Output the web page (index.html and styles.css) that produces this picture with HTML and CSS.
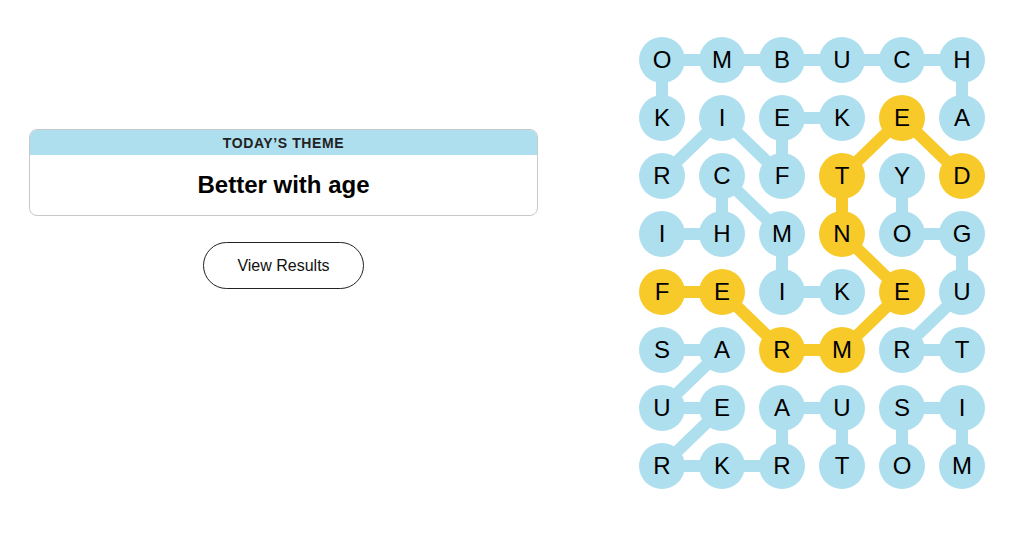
FILE: index.html
```html
<!DOCTYPE html>
<html lang="en">
<head>
    <meta charset="UTF-8">
    <meta name="viewport" content="width=device-width, initial-scale=1.0">
    <title>Strands</title>
    <link rel="stylesheet" href="styles.css">
</head>
<body>
    <div class="game">
        <div class="side">
            <div class="theme-card">
                <h2 class="theme-label">Today&#8217;s Theme</h2>
                <p class="theme-name">Better with age</p>
            </div>
            <button class="results-btn">View Results</button>
        </div>

        <div class="board">
            <svg class="board-lines" width="360" height="464" viewBox="0 0 360 464">
                <g stroke="#aedfee" stroke-width="12" stroke-linecap="round" fill="none">
                    <line x1="30" y1="29" x2="330" y2="29"/>
                    <line x1="30" y1="29" x2="30" y2="87"/>
                    <line x1="330" y1="29" x2="330" y2="87"/>
                    <line x1="90" y1="87" x2="30" y2="145"/>
                    <line x1="90" y1="87" x2="150" y2="145"/>
                    <line x1="150" y1="87" x2="210" y2="87"/>
                    <line x1="150" y1="87" x2="150" y2="145"/>
                    <line x1="90" y1="145" x2="90" y2="203"/>
                    <line x1="90" y1="145" x2="150" y2="203"/>
                    <line x1="270" y1="145" x2="270" y2="203"/>
                    <line x1="30" y1="203" x2="90" y2="203"/>
                    <line x1="270" y1="203" x2="330" y2="203"/>
                    <line x1="330" y1="203" x2="330" y2="261"/>
                    <line x1="150" y1="203" x2="150" y2="261"/>
                    <line x1="150" y1="261" x2="210" y2="261"/>
                    <line x1="330" y1="261" x2="270" y2="319"/>
                    <line x1="270" y1="319" x2="330" y2="319"/>
                    <line x1="30" y1="319" x2="90" y2="319"/>
                    <line x1="90" y1="319" x2="30" y2="377"/>
                    <line x1="30" y1="377" x2="90" y2="377"/>
                    <line x1="90" y1="377" x2="30" y2="435"/>
                    <line x1="30" y1="435" x2="150" y2="435"/>
                    <line x1="150" y1="377" x2="210" y2="377"/>
                    <line x1="150" y1="377" x2="150" y2="435"/>
                    <line x1="210" y1="377" x2="210" y2="435"/>
                    <line x1="270" y1="377" x2="330" y2="377"/>
                    <line x1="270" y1="377" x2="270" y2="435"/>
                    <line x1="330" y1="377" x2="330" y2="435"/>
                </g>
                <polyline points="30,261 90,261 150,319 210,319 270,261 210,203 210,145 270,87 330,145"
                    stroke="#f7ca2a" stroke-width="12" stroke-linecap="round" stroke-linejoin="round" fill="none"/>
            </svg>

            <div class="grid">
                <button class="letter">O</button>
                <button class="letter">M</button>
                <button class="letter">B</button>
                <button class="letter">U</button>
                <button class="letter">C</button>
                <button class="letter">H</button>

                <button class="letter">K</button>
                <button class="letter">I</button>
                <button class="letter">E</button>
                <button class="letter">K</button>
                <button class="letter spangram">E</button>
                <button class="letter">A</button>

                <button class="letter">R</button>
                <button class="letter">C</button>
                <button class="letter">F</button>
                <button class="letter spangram">T</button>
                <button class="letter">Y</button>
                <button class="letter spangram">D</button>

                <button class="letter">I</button>
                <button class="letter">H</button>
                <button class="letter">M</button>
                <button class="letter spangram">N</button>
                <button class="letter">O</button>
                <button class="letter">G</button>

                <button class="letter spangram">F</button>
                <button class="letter spangram">E</button>
                <button class="letter">I</button>
                <button class="letter">K</button>
                <button class="letter spangram">E</button>
                <button class="letter">U</button>

                <button class="letter">S</button>
                <button class="letter">A</button>
                <button class="letter spangram">R</button>
                <button class="letter spangram">M</button>
                <button class="letter">R</button>
                <button class="letter">T</button>

                <button class="letter">U</button>
                <button class="letter">E</button>
                <button class="letter">A</button>
                <button class="letter">U</button>
                <button class="letter">S</button>
                <button class="letter">I</button>

                <button class="letter">R</button>
                <button class="letter">K</button>
                <button class="letter">R</button>
                <button class="letter">T</button>
                <button class="letter">O</button>
                <button class="letter">M</button>
            </div>
        </div>
    </div>
</body>
</html>
```

FILE: styles.css
```css
body {
    margin: 0;
    font-family: "Liberation Sans", Arial, sans-serif;
    background-color: #fff;
    color: #000;
}
.game {
    display: flex;
    align-items: flex-start;
    padding-left: 29px;
    gap: 94px;
}
.side {
    width: 509px;
    margin-top: 129px;
    display: flex;
    flex-direction: column;
    align-items: center;
}
.theme-card {
    width: 100%;
    box-sizing: border-box;
    border: 1px solid #c9c9c9;
    border-radius: 8px;
    overflow: hidden;
    text-align: center;
}
.theme-label {
    margin: 0;
    height: 25px;
    line-height: 26px;
    background-color: #aedfee;
    font-size: 14px;
    font-weight: 600;
    text-transform: uppercase;
    letter-spacing: 0.6px;
    color: #222;
}
.theme-name {
    margin: 0;
    height: 60px;
    line-height: 60px;
    font-size: 24px;
    font-weight: bold;
}
.results-btn {
    margin-top: 26px;
    width: 161px;
    height: 47px;
    border: 1px solid #222;
    border-radius: 24px;
    background: #fff;
    font-family: inherit;
    font-size: 16px;
    color: #111;
    cursor: pointer;
}
.board {
    position: relative;
    margin-top: 31px;
    width: 360px;
    height: 464px;
}
.board-lines {
    position: absolute;
    top: 0;
    left: 0;
}
.grid {
    position: relative;
    display: grid;
    grid-template-columns: repeat(6, 60px);
    grid-template-rows: repeat(8, 58px);
    justify-items: center;
    align-items: center;
}
.letter {
    width: 46px;
    height: 46px;
    padding: 0;
    border: none;
    border-radius: 50%;
    background-color: #aedfee;
    font-family: inherit;
    font-size: 24px;
    color: #000;
    cursor: pointer;
}
.letter.spangram {
    background-color: #f7ca2a;
}
```
